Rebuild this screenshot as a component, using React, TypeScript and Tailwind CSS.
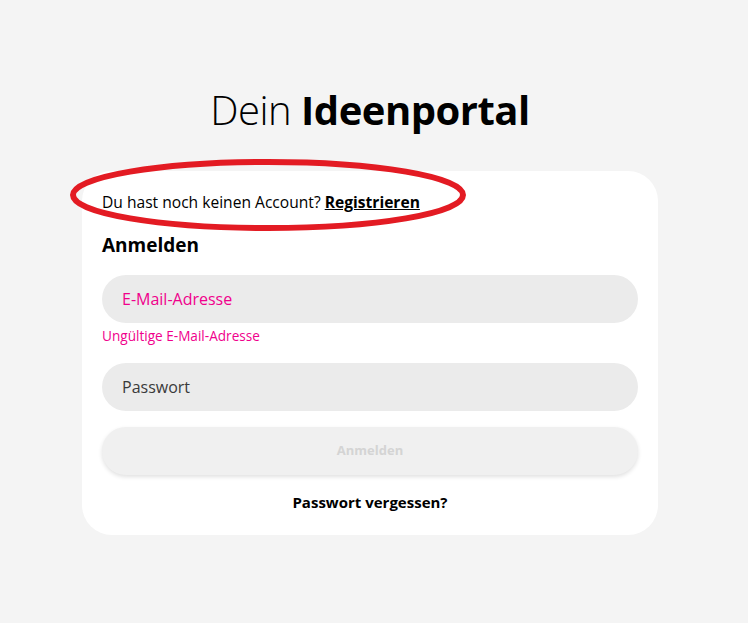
export default function App() {
  return (
    <div className="min-h-[623px] bg-[#f4f4f4] flex flex-col items-center pt-[86px] pr-2 font-['Open_Sans',sans-serif] text-black">
      <h1 className="text-[40px] leading-[48px] tracking-[-0.5px]">
        <span className="font-light">Dein </span>
        <span className="font-bold">Ideenportal</span>
      </h1>

      <div className="relative mt-[37px] w-[576px] bg-white rounded-[30px] px-5 pt-[21px] pb-[23px]">
        <p className="text-[15.6px] leading-5">
          Du hast noch keinen Account?{" "}
          <a href="#" className="font-bold underline">Registrieren</a>
        </p>

        <h2 className="mt-5 text-[19px] leading-[26px] font-bold">Anmelden</h2>

        <div className="mt-[17px] h-12 rounded-full bg-[#ebebeb] flex items-center px-5">
          <span className="text-[16px] text-[#f0008c]">E-Mail-Adresse</span>
        </div>
        <p className="mt-1 text-[13.6px] leading-[18px] text-[#f0008c]">Ungültige E-Mail-Adresse</p>

        <div className="mt-[18px] h-12 rounded-full bg-[#ebebeb] flex items-center px-5">
          <span className="text-[16px] text-[#3a3a3a]">Passwort</span>
        </div>

        <button className="mt-4 w-full h-12 rounded-full bg-[#f0f0f0] shadow-[0_2px_4px_rgba(0,0,0,0.12)] text-[13px] font-bold text-[#d4d4d4]">
          Anmelden
        </button>

        <p className="mt-[17px] text-center text-[15px] leading-5 font-bold">Passwort vergessen?</p>

        <svg className="absolute left-[-14px] top-[-13px] pointer-events-none" width="400" height="76" viewBox="0 0 400 76">
          <ellipse cx="200" cy="37" rx="195" ry="33" fill="none" stroke="#e31b23" strokeWidth="6" />
        </svg>
      </div>
    </div>
  );
}
